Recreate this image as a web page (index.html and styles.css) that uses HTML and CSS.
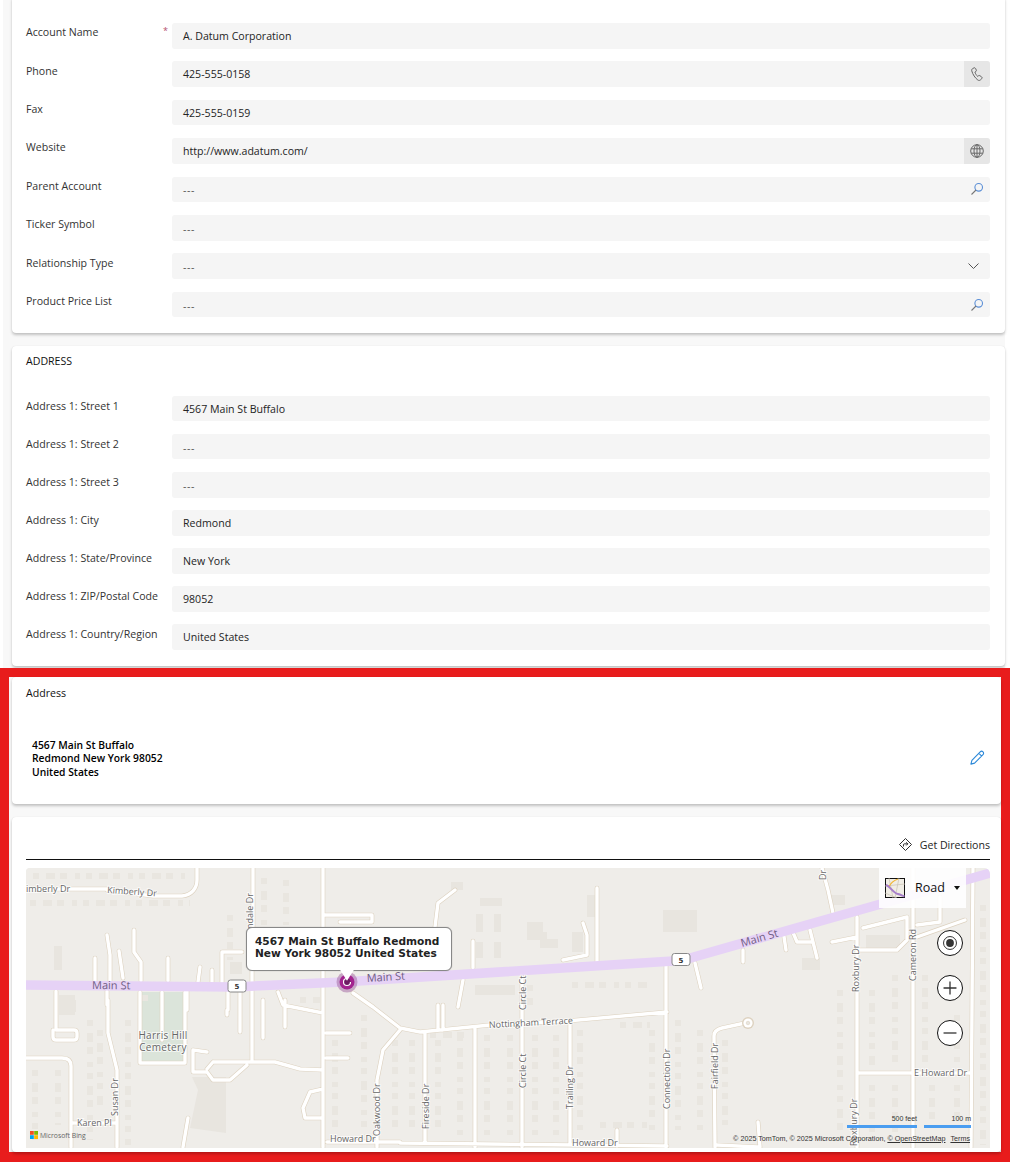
FILE: index.html
```html
<!DOCTYPE html>
<html lang="en">
<head>
<meta charset="utf-8">
<title>Account form</title>
<link rel="stylesheet" href="styles.css">
</head>
<body>
<main class="page">
  <section class="card card-first">
    <div class="rows rows-a">
      <div class="row"><div class="label"><span>Account Name</span><span class="req">*</span></div><div class="value">A. Datum Corporation</div></div>
      <div class="row"><div class="label">Phone</div><div class="value has-btn">425-555-0158<span class="btn"><svg class="ico" viewBox="0 0 16 16"><path d="M5.2 1.8 3.6 2.6C2.8 3 2.5 4 2.8 5c.9 3.4 3.3 7 6 9 .8.6 1.8.6 2.5 0l1.5-1.4c.5-.5.4-1.3-.2-1.7l-1.7-1.2c-.5-.3-1.1-.3-1.5.1l-.7.6C7.5 9.5 6.4 7.6 5.9 6.1l1-.6c.5-.3.6-.9.4-1.4l-.8-1.7c-.2-.5-.8-.8-1.3-.6Z"/></svg></span></div></div>
      <div class="row"><div class="label">Fax</div><div class="value">425-555-0159</div></div>
      <div class="row"><div class="label">Website</div><div class="value has-btn">http://www.adatum.com/<span class="btn"><svg class="ico" viewBox="0 0 16 16"><circle cx="8" cy="8" r="6.3"/><ellipse cx="8" cy="8" rx="3" ry="6.3"/><path d="M2.2 5.8h11.6M2.2 10.2h11.6M8 1.7v12.6"/></svg></span></div></div>
      <div class="row"><div class="label">Parent Account</div><div class="value empty">---<svg class="lookup" viewBox="0 0 14 14"><circle cx="8.7" cy="5.3" r="3.8"/><path class="lookup-h" d="M6 8 1.5 12.5"/></svg></div></div>
      <div class="row"><div class="label">Ticker Symbol</div><div class="value empty">---</div></div>
      <div class="row"><div class="label">Relationship Type</div><div class="value empty">---<svg class="chev" viewBox="0 0 11 6"><path d="M.5.5l5 5 5-5"/></svg></div></div>
      <div class="row"><div class="label">Product Price List</div><div class="value empty">---<svg class="lookup" viewBox="0 0 14 14"><circle cx="8.7" cy="5.3" r="3.8"/><path class="lookup-h" d="M6 8 1.5 12.5"/></svg></div></div>
    </div>
  </section>

  <section class="card card-second">
    <h2 class="title">ADDRESS</h2>
    <div class="rows rows-b">
      <div class="row"><div class="label">Address 1: Street 1</div><div class="value">4567 Main St Buffalo</div></div>
      <div class="row"><div class="label">Address 1: Street 2</div><div class="value empty">---</div></div>
      <div class="row"><div class="label">Address 1: Street 3</div><div class="value empty">---</div></div>
      <div class="row"><div class="label">Address 1: City</div><div class="value">Redmond</div></div>
      <div class="row"><div class="label">Address 1: State/Province</div><div class="value">New York</div></div>
      <div class="row"><div class="label">Address 1: ZIP/Postal Code</div><div class="value">98052</div></div>
      <div class="row"><div class="label">Address 1: Country/Region</div><div class="value">United States</div></div>
    </div>
  </section>

  <div class="frame">
    <section class="card card-third">
      <h2 class="title">Address</h2>
      <div class="addr-row">
        <address class="addr">4567 Main St Buffalo<br>Redmond New York 98052<br>United States</address>
        <svg class="pencil" viewBox="0 0 16 16"><path d="M11.2 1.9c.8-.8 2-.8 2.8 0s.8 2 0 2.8L5.6 13.1l-3.7 1 1-3.7 8.3-8.5ZM9.9 3.4l2.8 2.8"/></svg>
      </div>
    </section>

    <section class="card card-map">
      <div class="map-head">
        <svg class="dir-ico" viewBox="0 0 16 16"><path d="M8 1.6 14.4 8 8 14.4 1.6 8Z"/><path d="M5.8 10.2V8.3c0-.6.4-1 1-1h3.4M8.8 5.6l1.7 1.7-1.7 1.7"/></svg>
        <span>Get Directions</span>
      </div>
      <div class="map">
        <svg class="map-art" viewBox="26 868 964 280" width="964" height="280">
          <defs>
            <path id="roads" d="M26 889H107M107 890 153 896H182C192 895 197 888 197 880V868M253 868V927M252 971V1060M323 868V1147M107 935 110 955V981M119 951 123 978M134 930V952L141 962V981M95 958V981M168 958V981M200 967 198 982M212 970V982M242 952H222V982M56 991V1030M107 991V1005M187 991V1010M228 991V1010M240 991V1032M278 992 283 1005 323 1013M26 1058H62Q71 1058 71 1066V1147M108 1000V1033L117 1070V1147M72 1123H115M140 992V1063H185V992M162 992V1040M57 1030H74Q77 1030 77 1033V1037Q77 1040 74 1040H56Q53 1040 53 1037V1030M207 1052 193 1050V1072H207M213 1062H275L300 1069 323 1070M207 1069 213 1062M207 1072 213 1080H230L247 1065M323 1089 310 1092 303 1108 305 1118H323M188 1118 183 1147M227 1010V1015M263 1000V1038M285 1000V1027M326 1033H350M326 1058H348M327 1142H400M377 1147V1080L383 1050 400 1030M353 993 373 1007 400 1028 420 1032 490 1025 567 1021 667 1012M425 1032V1143M475 1028V1147M522 977V1147M570 1022V1143M666 966V1147M715 1147 714 1036Q714 1030 722 1028L745 1023M400 1143 667 1146M617 1130V1146M717 1145 758 1147M758 1122 760 1147M438 1005V1030M443 1005V1030M455 890 438 903 435 927M473 941V968M463 980 458 1007M597 888V962M583 923 587 935V955L563 960M695 963 701 988M743 950V962M822 868 828 890 833 913M857 917V1147M832 942 857 937M863 928 907 917V940L897 950H858M913 868V1147M917 925 940 922V897M917 937 965 920M973 868 971 1147M792 930 797 942H813M783 930 786 950M810 930 817 958M857 1073H971M324 915H372V922H340"/>
          </defs>
          <rect class="land" x="26" y="868" width="964" height="280"/>
          <rect class="green" x="141" y="992" width="44" height="72"/>
          <g class="bldg">
            <path d="M192 1077H226V1133L190 1128 198 1090Z"/>
            <path d="M663 910H697V932H663Z"/>
            <path d="M527 922H543V932H547V940H527Z"/>
            <path d="M540 939H558V948H540Z"/>
            <path d="M480 898H502V906H480Z"/>
            <path d="M476 914H483V932H476ZM494 914H501V932H494ZM476 942H483V958H476ZM494 942H501V958H494Z"/>
            <path d="M572 932H583V952H572ZM587 895H596V917H587ZM475 985H515V995H475Z"/>
            <path d="M54 946H62V970H54ZM59 995H75V1015H59ZM830 895H845V905H830ZM802 958H820V970H802ZM866 935H900V948H866Z"/>
            <path d="M451 882H463V890H451ZM436 940H445V960H436ZM290 938H315V960H290Z"/>
            <path d="M230 962H242V974H230ZM60 1000H76V1012H60Z"/>
          </g>
          <g class="houses">
            <path d="M33 876H185M30 903H190M230 915V960M264 878V925M286 880V925"/>
            <path d="M35 1070V1140M58 1070V1125M90 1020V1140M100 1030V1110M128 1020V1145"/>
            <path d="M335 1040V1130M364 1015V1135M395 1040V1135M412 1040V1130M438 1040V1130M460 1035V1135M487 1035V1135M510 1035V1135"/>
            <path d="M535 1035V1135M556 1035V1135M580 1030V1130M600 1125H650M652 1030V1130M678 1020V1130M700 1030V1130M725 1040V1125"/>
            <path d="M840 990V1140M872 990V1065M895 975V1065M925 975V1065M957 1015V1065M983 905V1145M872 1085V1135M895 1085V1135M932 1085V1125M957 1085V1125"/>
            <path d="M300 1000H320M145 995V1005M430 1035H470M530 985V1005M572 985H650M620 1025H650"/>
          </g>
          <use href="#roads" class="casing"/>
          <use href="#roads" class="road"/>
          <circle class="cul-case" cx="748" cy="1023" r="6"/>
          <circle class="cul" cx="748" cy="1023" r="4.6"/>
          <circle class="cul-in" cx="748" cy="1023" r="1.8"/>
          <path class="hwy" d="M26 985 233 987 343 982 673 961 690 958 990 873"/>
          <text class="lbl-main" x="92" y="989" transform="rotate(.4 92 989)">Main St</text>
          <text class="lbl-main" x="367" y="982" transform="rotate(-3.6 367 982)">Main St</text>
          <text class="lbl-main" x="742" y="947" transform="rotate(-16 742 947)">Main St</text>
          <g class="lbls">
            <text x="26" y="892">imberly Dr</text>
            <text x="107" y="893" transform="rotate(4 107 893)">Kimberly Dr</text>
            <text x="253" y="929" class="v" transform="rotate(-90 253 929)">ndale Dr</text>
            <text x="163" y="1039" class="mid">Harris Hill</text>
            <text x="163" y="1051" class="mid">Cemetery</text>
            <text x="118" y="1116" transform="rotate(-90 118 1116)">Susan Dr</text>
            <text x="77" y="1126">Karen Pl</text>
            <text x="330" y="1142">Howard Dr</text>
            <text x="380" y="1136" transform="rotate(-90 380 1136)">Oakwood Dr</text>
            <text x="429" y="1129" transform="rotate(-90 429 1129)">Fireside Dr</text>
            <text x="526" y="1088" transform="rotate(-90 526 1088)">Circle Ct</text>
            <text x="526" y="1010" transform="rotate(-90 526 1010)">Circle Ct</text>
            <text x="573" y="1109" transform="rotate(-90 573 1109)">Trailing Dr</text>
            <text x="670" y="1109" transform="rotate(-90 670 1109)">Connection Dr</text>
            <text x="718" y="1089" transform="rotate(-90 718 1089)">Fairfield Dr</text>
            <text x="489" y="1028" transform="rotate(-3 489 1028)">Nottingham Terrace</text>
            <text x="572" y="1146">Howard Dr</text>
            <text x="859" y="992" transform="rotate(-90 859 992)">Roxbury Dr</text>
            <text x="916" y="981" transform="rotate(-90 916 981)">Cameron Rd</text>
            <text x="914" y="1076">E Howard Dr</text>
            <text x="826" y="880" transform="rotate(-90 826 880)">Dr</text>
            <text x="857" y="1146" transform="rotate(-90 857 1146)">Roxbury Dr</text>
          </g>
          <g class="shield">
            <rect x="228" y="980" width="18" height="12" rx="2.5"/>
            <text x="237" y="989">5</text>
            <rect x="672" y="953.500" width="18" height="12" rx="2.5"/>
            <text x="681" y="962.500">5</text>
          </g>
          <circle class="pin-glow" cx="347" cy="982" r="10.500"/>
          <circle class="pin" cx="347" cy="982" r="7.500"/>
          <circle class="pin-ring" cx="347" cy="982" r="3.500"/>
        </svg>

        <div class="callout">4567 Main St Buffalo Redmond<br>New York 98052 United States</div>

        <div class="style-box">
          <svg class="style-ico" viewBox="0 0 20 20"><rect x=".5" y=".5" width="19" height="19"/><path class="st-thin" d="M4 0 8 20M14 0 10 20M0 8 20 6M0 15 12 20"/><path class="st-y" d="M4 9C6 4 10 2 13 1"/><path class="st-p" d="M1 7C5 8 8 15 13 16 15 16.500 17 17.500 19.500 18.500"/></svg>
          <span class="style-name">Road</span>
          <span class="caret"></span>
        </div>

        <div class="ctrls">
          <button class="ctrl" aria-label="Locate"><svg viewBox="0 0 26 26"><circle class="cfill-ring" cx="13" cy="13" r="7"/><circle class="cfill" cx="13" cy="13" r="4.200"/></svg></button>
          <button class="ctrl" aria-label="Zoom in"><svg viewBox="0 0 26 26"><path class="cline" d="M6 13h14M13 6v14"/></svg></button>
          <button class="ctrl" aria-label="Zoom out"><svg viewBox="0 0 26 26"><path class="cline" d="M6 13h14"/></svg></button>
        </div>

        <div class="brand">
          <svg class="ms" viewBox="0 0 8 8"><rect class="ms-r" width="3.800" height="3.800"/><rect class="ms-g" x="4.200" width="3.800" height="3.800"/><rect class="ms-b" y="4.200" width="3.800" height="3.800"/><rect class="ms-y" x="4.200" y="4.200" width="3.800" height="3.800"/></svg>
          <span>Microsoft Bing</span>
        </div>

        <div class="scales">
          <div class="scale scale-ft">500 feet</div>
          <div class="scale scale-m">100 m</div>
        </div>
        <div class="attrib">© 2025 TomTom, © 2025 Microsoft Corporation, <u>© OpenStreetMap</u><u class="terms">Terms</u></div>
      </div>
    </section>
  </div>
</main>
</body>
</html>
```
FILE: styles.css
```css
* { box-sizing: border-box; }
html, body { margin: 0; padding: 0; background: #fff; }
body {
  width: 1010px;
  height: 1162px;
  overflow: hidden;
  font-family: "Open Sans", "Noto Sans", sans-serif;
  font-size: 10.600px;
  color: #242424;
}
.page { margin-left: 3px; width: 1002px; padding-left: 9px; background: #f8f8f8; }
.card {
  background: #fff;
  border-radius: 4px;
  box-shadow: 0 2px 3px rgba(0, 0, 0, .22), 0 0 1px rgba(0, 0, 0, .1);
  padding-left: 14px;
}
.card-first { margin-top: -4px; padding: 27px 15px 15.400px 14px; }
.card-second { margin-top: 13px; padding: 7px 15px 16px 14px; height: 320px; }
.title { margin: 0; font-size: 10.600px; line-height: 16px; font-weight: 400; color: #111; }
.rows { display: flex; flex-direction: column; }
.rows-a { gap: 12.800px; }
.rows-b { gap: 12.500px; margin-top: 27px; }
.row { display: grid; grid-template-columns: 146px 1fr; height: 25.600px; }
.label { display: flex; justify-content: space-between; padding: 1.300px 4px 0 0; line-height: 16px; color: #333; }
.rows-b .label { padding-top: 2px; }
.req { color: #b4506c; font-size: 9px; line-height: 13px; }
.value {
  position: relative;
  display: flex;
  align-items: center;
  justify-content: space-between;
  padding: 0 11px;
  background: #f5f5f5;
  border-radius: 3px;
  line-height: 16px;
}
.value.empty { color: #555; padding-top: 2px; letter-spacing: .6px; }
.has-btn { padding-right: 0; }
.btn { display: flex; align-items: center; justify-content: center; width: 26px; align-self: stretch; background: #e6e6e6; border-radius: 0 3px 3px 0; }
.ico { width: 16px; height: 16px; fill: none; stroke: #666; stroke-width: 1; }
.lookup { width: 14px; height: 14px; margin-right: -5px; margin-top: -2px; fill: none; stroke: #5a8ed6; stroke-width: 1.100; }
.lookup-h { stroke: #777; }
.chev { width: 11px; height: 6px; margin-top: -2px; fill: none; stroke: #555; stroke-width: 1; }

.frame {
  margin: 2px 0 0 -12px;
  width: 1010px;
  height: 494px;
  border: solid #e81c1c;
  border-width: 9px;
  border-bottom-width: 10px;
  padding-left: 3px;
  background: #f8f8f8;
}
.card-third { height: 127px; padding: 8px 16px 0 14px; }
.addr-row { display: flex; align-items: center; justify-content: space-between; margin: 38px 0 0 6px; }
.addr { font-style: normal; font-size: 10.300px; font-weight: 600; line-height: 13.500px; color: #000; }
.pencil { width: 16px; height: 16px; margin-top: -2px; fill: none; stroke: #2b88d8; stroke-width: 1.100; stroke-linejoin: round; }
.card-map { margin-top: 13px; height: 335px; padding: 0 11px 0 14px; }
.map-head { display: flex; justify-content: flex-end; align-items: center; gap: 7px; height: 43px; padding-bottom: 6px; padding-top: 20px; border-bottom: 1px solid #111; }
.dir-ico { width: 15px; height: 15px; fill: none; stroke: #222; stroke-width: 1; }
.map { position: relative; margin-top: 8px; height: 280px; overflow: hidden; border-radius: 4px 6px 0 0; background: #efede9; }
.map-art { display: block; }
.land { fill: #efede9; }
.green { fill: #dbe4da; }
.bldg path { fill: #e8e5df; }
.houses path { fill: none; stroke: #e9e6e0; stroke-width: 6; stroke-dasharray: 6 7 9 5 7 8 5 6; }
.casing { fill: none; stroke: #ddd2c0; stroke-width: 4.600; stroke-linecap: round; stroke-linejoin: round; }
.road { fill: none; stroke: #fff; stroke-width: 3.400; stroke-linecap: round; stroke-linejoin: round; }
.cul-case { fill: #ddd2c0; }
.cul { fill: #fff; }
.cul-in { fill: #e8e5df; stroke: #d9cdb9; stroke-width: .5; }
.hwy { fill: none; stroke: #e6d2f6; stroke-width: 9.500; }
.lbl-main { font-size: 11px; fill: #6f5c83; }
.lbls text { font-size: 9px; fill: #666; stroke: #fff; stroke-width: 2px; paint-order: stroke; stroke-opacity: .7; }
.lbls .mid { text-anchor: middle; font-size: 10px; letter-spacing: .3px; }
.shield rect { fill: #fff; stroke: #888; stroke-width: 1; }
.shield text { font-family: "DejaVu Sans", sans-serif; font-size: 7px; font-weight: 700; fill: #333; text-anchor: middle; }
.pin-glow { fill: rgba(165, 110, 165, .55); }
.pin { fill: #a3248f; }
.pin-ring { fill: #6d1a63; stroke: #fff; stroke-width: 1.200; stroke-dasharray: 16 6; }

.callout {
  position: absolute;
  left: 220px;
  top: 59px;
  width: 206px;
  height: 44px;
  padding: 7px 0 0 8px;
  background: #fff;
  border: 1px solid #888;
  border-radius: 6px;
  box-shadow: 0 0 1px rgba(0, 0, 0, .4);
  font-family: "DejaVu Sans", sans-serif;
  font-size: 10.600px;
  font-weight: 700;
  line-height: 12px;
  color: #222;
  white-space: nowrap;
}
.callout::after {
  content: "";
  position: absolute;
  left: 93px;
  top: 42px;
  width: 14px;
  height: 11px;
  background: #fff;
  clip-path: polygon(0 0, 100% 0, 50% 100%);
}
.style-box {
  position: absolute;
  left: 853px;
  top: 0;
  width: 87px;
  height: 40px;
  display: flex;
  align-items: center;
  padding-left: 6px;
  background: rgba(255, 255, 255, .88);
  color: #111;
}
.style-ico { width: 20px; height: 20px; flex: none; }
.style-ico rect { fill: #f0ede5; stroke: #111; stroke-width: 1; }
.st-thin { fill: none; stroke: #c9c3b5; stroke-width: .7; }
.st-y { fill: none; stroke: #f2b634; stroke-width: 1.300; }
.st-p { fill: none; stroke: #a77fc9; stroke-width: 2; }
.style-name { margin: 1px 0 0 10px; font-size: 12.500px; line-height: 16px; }
.caret { margin-left: 9px; width: 0; height: 0; border: 3.500px solid transparent; border-top: 4px solid #111; border-bottom: 0; }
.ctrls { position: absolute; left: 911px; top: 62px; display: flex; flex-direction: column; gap: 19px; }
.ctrl { display: block; width: 26px; height: 26px; padding: 0; background: #fff; border: 1.400px solid #111; border-radius: 50%; }
.ctrl svg { display: block; width: 100%; height: 100%; }
.cfill-ring { fill: #fff; stroke: #222; stroke-width: 1; }
.cfill { fill: #333; }
.cline { stroke: #333; stroke-width: 1.400; fill: none; }
.brand { position: absolute; left: 4px; top: 263px; display: flex; align-items: center; gap: 2px; font-size: 6.800px; line-height: 9px; color: #666; }
.ms { width: 8px; height: 8px; }
.ms-r { fill: #f25022; }
.ms-g { fill: #7fba00; }
.ms-b { fill: #00a4ef; }
.ms-y { fill: #ffb900; }
.scales { position: absolute; left: 821px; top: 246px; display: flex; gap: 7px; }
.scale { height: 14px; border-bottom: 3px solid #4a9df0; font: 7px/10px "Liberation Sans", sans-serif; text-align: right; color: #333; }
.scale-ft { width: 70px; }
.scale-m { width: 47px; }
.attrib { position: absolute; right: 20px; top: 266px; font: 7.200px/9px "Liberation Sans", sans-serif; color: #333; white-space: nowrap; }
.terms { margin-left: 5px; }
```
